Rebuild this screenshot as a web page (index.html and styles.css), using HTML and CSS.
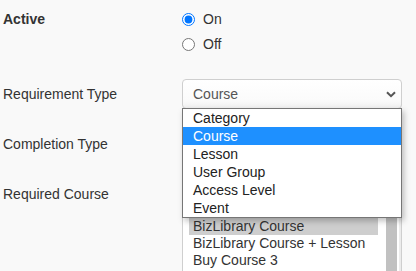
FILE: index.html
```html
<!DOCTYPE html>
<html lang="en">
  <head>
    <meta charset="UTF-8" />
    <meta name="viewport" content="width=device-width, initial-scale=1.0" />
    <title>Requirement</title>
    <link rel="stylesheet" href="styles.css">
  </head>
  <body>
    <form class="settings">
      <div class="row row-active">
        <span class="label label-bold">Active</span>
        <div class="radios">
          <label class="radio-opt">
            <input type="radio" name="active" checked />
            <span>On</span>
          </label>
          <label class="radio-opt">
            <input type="radio" name="active" />
            <span>Off</span>
          </label>
        </div>
      </div>

      <div class="row">
        <span class="label">Requirement Type</span>
        <div class="field">
          <div class="select">
            <span>Course</span>
            <svg class="chevron" width="10" height="7" viewBox="0 0 10 7">
              <path d="M1 1.2 L5 5.2 L9 1.2" fill="none" stroke="#555" stroke-width="2" />
            </svg>
          </div>
          <ul class="dropdown">
            <li>Category</li>
            <li class="active">Course</li>
            <li>Lesson</li>
            <li>User Group</li>
            <li>Access Level</li>
            <li>Event</li>
          </ul>
        </div>
      </div>

      <div class="row">
        <span class="label">Completion Type</span>
        <div class="select"></div>
      </div>

      <div class="row row-top">
        <span class="label">Required Course</span>
        <div class="listbox">
          <ul class="options">
            <li class="selected">BizLibrary Course</li>
            <li>BizLibrary Course + Lesson</li>
            <li>Buy Course 3</li>
          </ul>
          <div class="scrollbar"><div class="thumb"></div></div>
        </div>
      </div>
    </form>
  </body>
</html>
```

FILE: styles.css
```css
* {
  box-sizing: border-box;
}

body {
  margin: 0;
  background: #f9f9f9;
  font-family: "Liberation Sans", Arial, sans-serif;
  font-size: 14px;
  color: #333;
}

.settings {
  padding: 11px 0 0 3px;
  display: flex;
  flex-direction: column;
  gap: 20px;
}

.row {
  display: grid;
  grid-template-columns: 179px 220px;
  align-items: center;
}

.row-active {
  align-items: start;
  margin-bottom: 6px;
}

.row-top {
  align-items: start;
}

.label {
  line-height: 17px;
}

.row-top .label {
  line-height: 30px;
}

.label-bold {
  font-weight: bold;
}

.radios {
  display: flex;
  flex-direction: column;
  gap: 8px;
}

.radio-opt {
  display: flex;
  align-items: center;
  gap: 8px;
  height: 17px;
  line-height: 17px;
}

.radio-opt input {
  margin: 0;
  width: 13px;
  height: 13px;
}

.field {
  position: relative;
}

.select {
  height: 30px;
  display: flex;
  align-items: center;
  justify-content: space-between;
  padding: 0 5px 0 10px;
  border: 1px solid #cfcfcf;
  border-radius: 4px;
  background: linear-gradient(#fff, #fbfbfb 70%, #f1f1f1);
  color: #555;
}

.dropdown {
  position: absolute;
  top: 29px;
  left: 0;
  width: 220px;
  margin: 0;
  padding: 0;
  list-style: none;
  background: #fff;
  border: 1px solid #767676;
  box-shadow: 2px 3px 6px rgba(0, 0, 0, 0.25);
  color: #222;
  z-index: 2;
}

.dropdown li {
  height: 18px;
  line-height: 18px;
  padding-left: 10px;
}

.dropdown li.active {
  background: #1e90ff;
  color: #fff;
}

.listbox {
  display: flex;
  height: 92px;
  background: #fff;
  border: 1px solid #cfcfcf;
  border-bottom: 0;
  border-radius: 4px 4px 0 0;
  overflow: hidden;
}

.options {
  flex: 1;
  margin: 0;
  padding: 38px 6px 0;
  list-style: none;
}

.options li {
  height: 17px;
  line-height: 17px;
  padding-left: 4px;
}

.options li.selected {
  background: #cecece;
}

.scrollbar {
  width: 17px;
  padding: 38px 2px 0;
  background: #fff;
  border-right: 2px solid #ececec;
}

.thumb {
  height: 100%;
  background: #c1c1c1;
}
```
